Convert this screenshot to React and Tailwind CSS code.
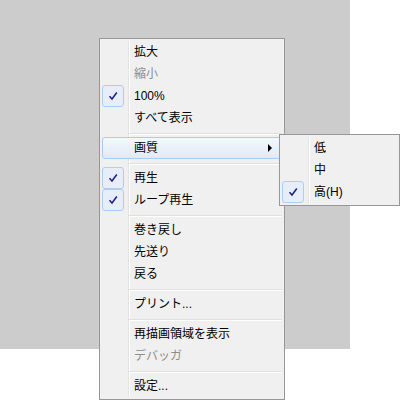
const mainItems = [
  { label: "拡大" },
  { label: "縮小", disabled: true },
  { label: "100%", checked: true },
  { label: "すべて表示" },
  { sep: true },
  { label: "画質", active: true, sub: true },
  { sep: true },
  { label: "再生", checked: true },
  { label: "ループ再生", checked: true },
  { sep: true },
  { label: "巻き戻し" },
  { label: "先送り" },
  { label: "戻る" },
  { sep: true },
  { label: "プリント..." },
  { sep: true },
  { label: "再描画領域を表示" },
  { label: "デバッガ", disabled: true },
  { sep: true },
  { label: "設定..." },
];

const qualityItems = [
  { label: "低" },
  { label: "中" },
  { label: "高(H)", checked: true },
];

const CheckMark = () => (
  <svg width="10" height="10" viewBox="0 0 10 10">
    <path d="M1.5 5.2 L4 8 L8.8 1.5" fill="none" stroke="#1f2388" strokeWidth="1.6" />
  </svg>
);

const MenuRow = ({ item }) => {
  if (item.sep) {
    return (
      <div className="h-[8px] pl-[27px]">
        <div className="mt-[4px] h-[2px] border-t border-b border-t-[#e0e0e0] border-b-white" />
      </div>
    );
  }
  return (
    <div
      className={
        "relative flex h-[22px] items-center rounded-[3px] border " +
        (item.active
          ? "border-[#aaccf4] bg-linear-to-b from-[#f3f8fd] to-[#e0eaf8]"
          : "border-transparent")
      }
    >
      <div className="ml-[-1px] flex h-[22px] w-[22px] shrink-0 items-center justify-center">
        {item.checked && (
          <div className="flex h-[22px] w-[22px] items-center justify-center rounded-[3px] border border-[#aecdf3] bg-[#e7eefa]">
            <CheckMark />
          </div>
        )}
      </div>
      <span
        className={
          "ml-[10px] whitespace-nowrap text-[12px] leading-[22px] " +
          (item.disabled ? "text-[#8d8d8d]" : "text-black")
        }
      >
        {item.label}
      </span>
      {item.sub && (
        <svg className="absolute right-[9px] top-[6px]" width="4" height="8" viewBox="0 0 4 8">
          <polygon points="0,0 4,4 0,8" fill="#000" />
        </svg>
      )}
    </div>
  );
};

const Menu = ({ items, className }) => (
  <div className={"absolute border border-[#979797] bg-[#f0f0f0] p-[2px] " + className}>
    <div className="absolute bottom-[2px] left-[28px] top-[2px] w-px bg-[#e2e3e3]" />
    <div className="absolute bottom-[2px] left-[29px] top-[2px] w-px bg-white" />
    <div className="relative flex flex-col">
      {items.map((item, i) => (
        <MenuRow key={i} item={item} />
      ))}
    </div>
  </div>
);

export default function App() {
  return (
    <div className="relative h-[400px] w-[400px] overflow-hidden bg-white font-['Liberation_Sans','Noto_Sans_CJK_JP',sans-serif]">
      <div className="h-[349px] w-[350px] bg-[#cccccc]" />
      <Menu items={mainItems} className="left-[99px] top-[38px] w-[186px]" />
      <Menu items={qualityItems} className="left-[279px] top-[134px] w-[121px]" />
    </div>
  );
}
